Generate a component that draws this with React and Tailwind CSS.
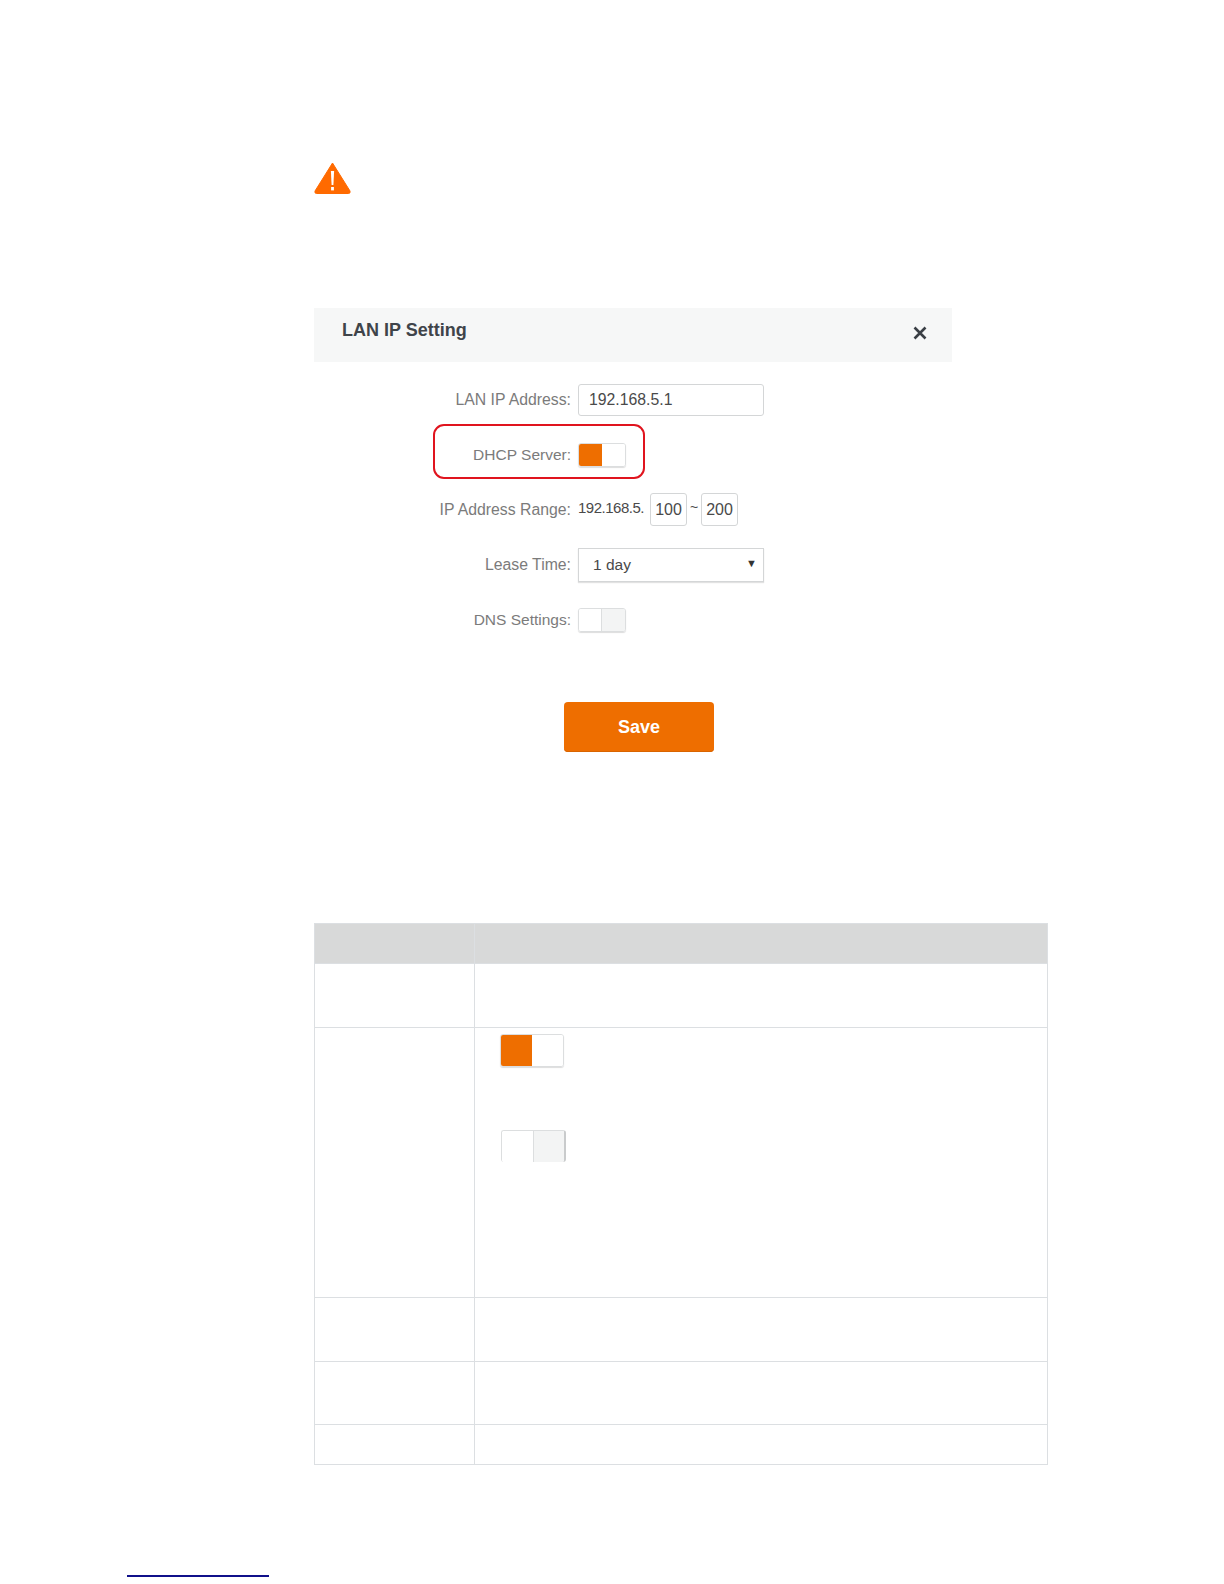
const labelClass = 'w-[257px] text-right text-[#7b7b7b]';

const ToggleOn = ({large}) => (
  <div
    className={`flex overflow-hidden rounded-[3px] border border-[#dcdedf] shadow-[0_1px_1px_#dddddd] ${
      large ? 'w-[64px] h-[33px]' : 'w-[48px] h-[24px]'
    }`}>
    <div className="w-1/2 bg-[#ee6e00]" />
    <div className="w-1/2 bg-white" />
  </div>
);

const ToggleOff = ({large}) => (
  <div
    className={`flex overflow-hidden rounded-[3px] border border-[#dcdedf] ${
      large ? 'w-[65px] h-[32px] border-r-2 border-r-[#c9cbcc] border-b-0' : 'w-[48px] h-[24px] shadow-[0_1px_1px_#dddddd]'
    }`}>
    <div className="w-[51%] bg-white border-r border-[#dcdedf]" />
    <div className="flex-1 bg-[#f3f4f4]" />
  </div>
);

const WarningIcon = () => (
  <svg width="37" height="32" viewBox="0 0 37 32" className="block">
    <path
      d="M18.5 1 L36 29 Q36.6 31.5 34.5 31.5 L2.5 31.5 Q0.4 31.5 1 29 Z"
      fill="#ff6a00"
      stroke="#ff6a00"
      strokeLinejoin="round"
    />
    <path d="M16.9 9 L20.1 9 L19.4 23 L17.6 23 Z" fill="#fff" />
    <rect x="17.1" y="25" width="2.8" height="3.4" fill="#fff" />
  </svg>
);

const CloseIcon = () => (
  <svg width="14" height="14" viewBox="0 0 14 14" className="block">
    <path d="M1.5 1.5 L12.5 12.5 M12.5 1.5 L1.5 12.5" stroke="#3a3f45" strokeWidth="2.6" />
  </svg>
);

const App = () => {
  return (
    <div className="w-[1224px] h-[1584px] overflow-hidden bg-white font-['Liberation_Sans',Arial,sans-serif]">
      <div className="ml-[314px] pt-[162px]">
        <WarningIcon />

        <div className="mt-[114px] w-[638px] h-[54px] bg-[#f6f7f7] flex justify-between pl-[28px] pr-[25px]">
          <h1 className="mt-[11px] text-[18px] leading-[22px] font-bold text-[#3f444a]">LAN IP Setting</h1>
          <div className="mt-[18px]">
            <CloseIcon />
          </div>
        </div>

        <div className="mt-[22px] flex items-center gap-[7px] h-[32px]">
          <span className={`${labelClass} text-[15.8px]`}>LAN IP Address:</span>
          <div className="w-[186px] h-[32px] border border-[#d4d6d7] rounded-[3px] pl-[10px] flex items-center text-[15.8px] text-[#4a4a4a]">
            192.168.5.1
          </div>
        </div>

        <div className="relative mt-[27px] flex items-center gap-[7px] h-[24px]">
          <div className="absolute left-[119px] -top-[19px] w-[212px] h-[55px] border-2 border-[#e0141e] rounded-[11px]" />
          <span className={`${labelClass} text-[15.5px]`}>DHCP Server:</span>
          <ToggleOn />
        </div>

        <div className="mt-[26px] flex items-center h-[33px]">
          <span className={`${labelClass} text-[15.8px]`}>IP Address Range:</span>
          <span className="ml-[7px] w-[72px] text-[15px] tracking-[-0.5px] text-[#4a4a4a] -mt-[3px]">192.168.5.</span>
          <div className="w-[37px] h-[33px] border border-[#d4d6d7] rounded-[3px] flex items-center justify-center text-[16px] text-[#4a4a4a]">
            100
          </div>
          <span className="w-[14px] text-center text-[14px] text-[#4a4a4a] -mt-[4px]">~</span>
          <div className="w-[37px] h-[33px] border border-[#d4d6d7] rounded-[3px] flex items-center justify-center text-[16px] text-[#4a4a4a]">
            200
          </div>
        </div>

        <div className="mt-[22px] flex items-center gap-[7px] h-[34px]">
          <span className={`${labelClass} text-[15.8px]`}>Lease Time:</span>
          <div className="w-[186px] h-[34px] border border-[#d4d6d7] shadow-[0_1px_1px_#e2e2e2] pl-[14px] pr-[6px] flex items-center justify-between text-[15.5px] text-[#4a4a4a]">
            <span>1 day</span>
            <span className="text-[11px] text-[#333] -mt-[3px]">▼</span>
          </div>
        </div>

        <div className="mt-[26px] flex items-center gap-[7px] h-[24px]">
          <span className={`${labelClass} text-[15.5px]`}>DNS Settings:</span>
          <ToggleOff />
        </div>

        <button className="block mt-[70px] ml-[250px] w-[150px] h-[50px] rounded-[4px] bg-[#ee6e00] shadow-[inset_0_-1px_0_#d96400] text-white text-[18px] font-bold">
          Save
        </button>

        <table className="mt-[171px] w-[734px] table-fixed border-collapse">
          <colgroup>
            <col className="w-[160px]" />
            <col />
          </colgroup>
          <tbody>
            <tr className="h-[40px] bg-[#d8d9d9]">
              <td className="border border-[#dcdfe2]" />
              <td className="border border-[#dcdfe2]" />
            </tr>
            <tr className="h-[64px]">
              <td className="border border-[#dcdfe2]" />
              <td className="border border-[#dcdfe2]" />
            </tr>
            <tr className="h-[270px]">
              <td className="border border-[#dcdfe2]" />
              <td className="border border-[#dcdfe2] align-top pt-[6px] pl-[25px]">
                <ToggleOn large />
                <div className="mt-[63px] ml-[1px]">
                  <ToggleOff large />
                </div>
              </td>
            </tr>
            <tr className="h-[64px]">
              <td className="border border-[#dcdfe2]" />
              <td className="border border-[#dcdfe2]" />
            </tr>
            <tr className="h-[63px]">
              <td className="border border-[#dcdfe2]" />
              <td className="border border-[#dcdfe2]" />
            </tr>
            <tr className="h-[40px]">
              <td className="border border-[#dcdfe2]" />
              <td className="border border-[#dcdfe2]" />
            </tr>
          </tbody>
        </table>
      </div>

      <div className="mt-[110px] ml-[127px] w-[142px] h-[2px] bg-[#10108a]" />
    </div>
  );
};

export default App;
